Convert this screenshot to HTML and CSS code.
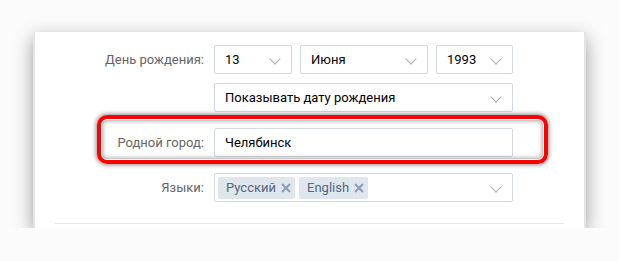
FILE: index.html
```html
<!DOCTYPE html>
<html lang="ru">
<head>
    <meta charset="UTF-8">
    <title>Редактирование профиля</title>
    <link rel="stylesheet" href="styles.css">
</head>
<body>

<div class="card">
    <div class="row">
        <div class="label">День рождения:</div>
        <div class="field-group">
            <div class="select day"><span>13</span><i class="chev"></i></div>
            <div class="select month"><span>Июня</span><i class="chev"></i></div>
            <div class="select year"><span>1993</span><i class="chev"></i></div>
        </div>
    </div>

    <div class="row row-sub">
        <div class="label"></div>
        <div class="select wide"><span>Показывать дату рождения</span><i class="chev"></i></div>
    </div>

    <div class="row row-mark">
        <div class="label">Родной город:</div>
        <div class="input wide"><span>Челябинск</span></div>
    </div>

    <div class="row">
        <div class="label">Языки:</div>
        <div class="select wide tags">
            <span class="tag">Русский
                <svg class="x" width="10" height="10" viewBox="0 0 10 10"><path d="M1 1L9 9M9 1L1 9"/></svg>
            </span>
            <span class="tag">English
                <svg class="x" width="10" height="10" viewBox="0 0 10 10"><path d="M1 1L9 9M9 1L1 9"/></svg>
            </span>
            <i class="chev"></i>
        </div>
    </div>

    <div class="divider"></div>
</div>

</body>
</html>
```

FILE: styles.css
```css
body {
    margin: 0;
    padding: 32px 0 0 33px;
    background: #fbfbfb;
    font-family: Roboto, "Noto Sans", Arial, sans-serif;
    font-size: 13px;
}

.card {
    width: 549px;
    height: 183px;
    padding-top: 13px;
    background: #fff;
    border-left: 2px solid #e4e4e4;
    border-right: 2px solid #e4e4e4;
    box-shadow: 0 6px 18px rgba(0, 0, 0, 0.38);
}

.row {
    display: flex;
    align-items: center;
    height: 29px;
}

.row-sub { margin-top: 9px; }
.row-mark { margin-top: 16px; position: relative; }
.row-mark + .row { margin-top: 16px; }

.row-mark::after {
    content: "";
    position: absolute;
    left: 62px;
    top: -13px;
    width: 443px;
    height: 41px;
    border: 4px solid #f00;
    border-radius: 10px;
    box-shadow: 0 0 4px 1px rgba(0, 0, 0, 0.45), inset 0 0 0 1px #fff, inset 0 0 4px 2px rgba(0, 0, 0, 0.35);
}

.label {
    width: 169px;
    padding-right: 10px;
    text-align: right;
    color: #656565;
}

.field-group {
    display: flex;
    gap: 8px;
}

.select, .input {
    box-sizing: border-box;
    height: 29px;
    border: 1px solid #d3d9de;
    border-radius: 2px;
    display: flex;
    align-items: center;
    padding-left: 10px;
    color: #000;
    position: relative;
}

.day { width: 78px; }
.month { width: 128px; }
.year { width: 77px; }
.wide { width: 299px; }

.chev {
    position: absolute;
    right: 12px;
    top: 9px;
    width: 7px;
    height: 7px;
    border-right: 1px solid #a8b0b8;
    border-bottom: 1px solid #a8b0b8;
    transform: rotate(45deg);
}

.tags {
    padding-left: 3px;
    gap: 4px;
}

.tag {
    display: flex;
    align-items: center;
    gap: 5px;
    background: #dfe6ed;
    color: #55677d;
    border-radius: 2px;
    height: 22px;
    padding: 0 4px 0 8px;
}

.x {
    stroke: #8a9fb4;
    stroke-width: 2;
    fill: none;
}

.divider {
    margin: 21px 20px 0 20px;
    border-top: 1px solid #e7e8ec;
}
```
